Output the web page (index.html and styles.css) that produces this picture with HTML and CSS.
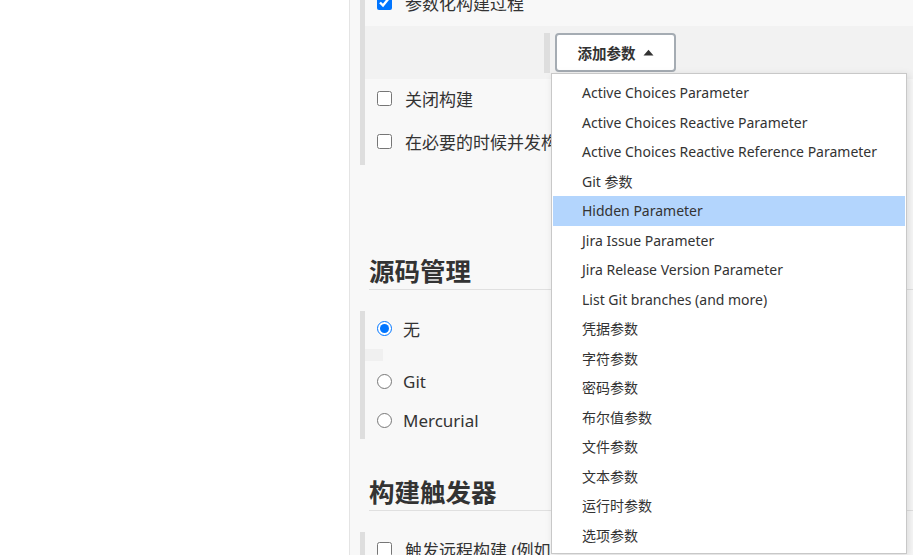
FILE: index.html
```html
<!DOCTYPE html>
<html lang="zh">
<head>
<meta charset="utf-8">
<link rel="stylesheet" href="styles.css">
</head>
<body>
<div class="sidebar"></div>
<div class="main">
  <div class="section top">
    <div class="row row-first"><input type="checkbox" checked><span>参数化构建过程</span></div>
    <div class="nested">
      <div class="nested-bar"></div>
      <button class="add-btn">添加参数 <svg width="11" height="7" viewBox="0 0 11 7"><path d="M0.5 6.5 L5.5 0.8 L10.5 6.5 Z" fill="#333"/></svg></button>
    </div>
    <div class="row row-a"><input type="checkbox"><span>关闭构建</span></div>
    <div class="row row-b"><input type="checkbox"><span class="clip">在必要的时候并发构建</span></div>
  </div>

  <h2 class="heading h-scm">源码管理</h2>
  <div class="section radios">
    <div class="row r1"><input type="radio" name="scm" checked><span>无</span></div>
    <div class="stub"></div>
    <div class="row r2"><input type="radio" name="scm"><span>Git</span></div>
    <div class="row r3"><input type="radio" name="scm"><span>Mercurial</span></div>
  </div>

  <h2 class="heading h-trig">构建触发器</h2>
  <div class="section trig">
    <div class="row r4"><input type="checkbox"><span class="clip">触发远程构建 (例如,使用脚本)</span></div>
  </div>

  <ul class="menu">
    <li>Active Choices Parameter</li>
    <li>Active Choices Reactive Parameter</li>
    <li>Active Choices Reactive Reference Parameter</li>
    <li>Git 参数</li>
    <li class="active">Hidden Parameter</li>
    <li>Jira Issue Parameter</li>
    <li>Jira Release Version Parameter</li>
    <li>List Git branches (and more)</li>
    <li>凭据参数</li>
    <li>字符参数</li>
    <li>密码参数</li>
    <li>布尔值参数</li>
    <li>文件参数</li>
    <li>文本参数</li>
    <li>运行时参数</li>
    <li>选项参数</li>
  </ul>
</div>
</body>
</html>
```

FILE: styles.css
```css
* { box-sizing: border-box; }
html, body {
  margin: 0;
  padding: 0;
  height: 555px;
  overflow: hidden;
}
body {
  display: flex;
  font-family: "Noto Sans", "Noto Sans CJK SC", sans-serif;
  color: #333;
  background: #fff;
}
.sidebar {
  width: 350px;
  flex: none;
  background: #fff;
  border-right: 1px solid #e4e4e4;
}
.main {
  flex: 1;
  position: relative;
  background: #f8f8f8;
  padding-left: 10px;
}
.section {
  border-left: 5px solid #dedede;
}
.top {
  margin-top: -22px;
}
.row {
  display: flex;
  align-items: center;
  padding-left: 12px;
  font-size: 17px;
}
.row input {
  margin: 0 13px 0 0;
  width: 15px;
  height: 15px;
  flex: none;
}
.row input[type="radio"] {
  margin-right: 11px;
}
.row span { white-space: nowrap; }
.row span.clip {
  max-width: 146px;
  overflow: hidden;
}
.row-first { height: 48px; }
.nested {
  height: 53px;
  background: #f2f2f2;
  display: flex;
  align-items: flex-start;
  padding-left: 179px;
  padding-top: 7px;
}
.nested-bar {
  width: 6px;
  height: 40px;
  background: #dedede;
  margin-right: 5px;
}
.add-btn {
  width: 121px;
  height: 39px;
  border: 2px solid #a5acb3;
  border-radius: 4px;
  background: #fff;
  font-family: inherit;
  font-size: 14.5px;
  font-weight: 600;
  color: #333;
  display: flex;
  align-items: center;
  justify-content: center;
  gap: 7px;
  padding: 0;
}
.row-a { height: 38px; }
.row-b { height: 48px; }

.heading {
  margin: 0;
  margin-left: 9px;
  font-size: 25.5px;
  font-weight: 700;
  line-height: 36px;
  height: 37px;
  border-bottom: 1px solid #e0e0e0;
  color: #333;
}
.h-scm { margin-top: 88px; }
.radios { margin-top: 21px; }
.r1 { height: 34px; }
.stub {
  height: 12px;
  width: 18px;
  margin-top: 4px;
  background: #f0f0f0;
}
.r2 { height: 40px; }
.r3 { height: 38px; }
.h-trig { margin-top: 35px; }
.trig { margin-top: 21px; }
.r4 { height: 34px; }

.menu {
  position: absolute;
  left: 201px;
  top: 73px;
  width: 356px;
  height: 481px;
  margin: 0;
  padding: 4px 1px;
  list-style: none;
  background: #fff;
  border: 1px solid #c8c8c8;
  box-shadow: 2px 2px 8px rgba(0,0,0,0.12);
  font-size: 14px;
  color: #333;
}
.menu li {
  height: 29.5px;
  line-height: 29.5px;
  padding-left: 29px;
  white-space: nowrap;
}
.menu li.active {
  background: #b3d5fd;
}
```
